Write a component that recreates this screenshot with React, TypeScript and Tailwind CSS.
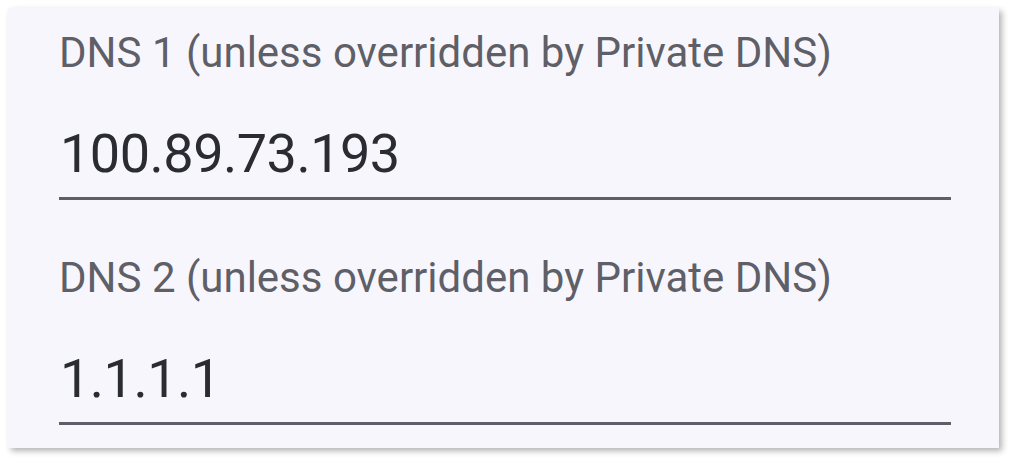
import React from "react";

interface DnsFieldProps {
  label: string;
  value: string;
}

const DnsField: React.FC<DnsFieldProps> = ({ label, value }) => {
  return (
    <div className="flex flex-col">
      <div className="h-[48px] text-[42px] leading-[48px] text-[#5e5f67] whitespace-nowrap">
        {label}
      </div>
      <div className="mt-[45px] h-[64px] text-[54px] leading-[64px] tracking-[-0.5px] text-[#2a2b33] ml-[1px] whitespace-nowrap">
        {value}
      </div>
      <div className="mt-[11px] h-[3px] w-[892px] bg-[#5f5d67]" />
    </div>
  );
};

export default function App() {
  return (
    <div
      className="w-[1012px] h-[461px] bg-white p-[8px]"
      style={{ fontFamily: "Roboto, 'Liberation Sans', sans-serif" }}
    >
      <div className="w-[991px] h-[440px] bg-[#f8f6fd] shadow-[3px_3px_6px_rgba(0,0,0,0.3)] pl-[51px] pt-[21px] flex flex-col gap-[54px]">
        <DnsField label="DNS 1 (unless overridden by Private DNS)" value="100.89.73.193" />
        <DnsField label="DNS 2 (unless overridden by Private DNS)" value="1.1.1.1" />
      </div>
    </div>
  );
}
